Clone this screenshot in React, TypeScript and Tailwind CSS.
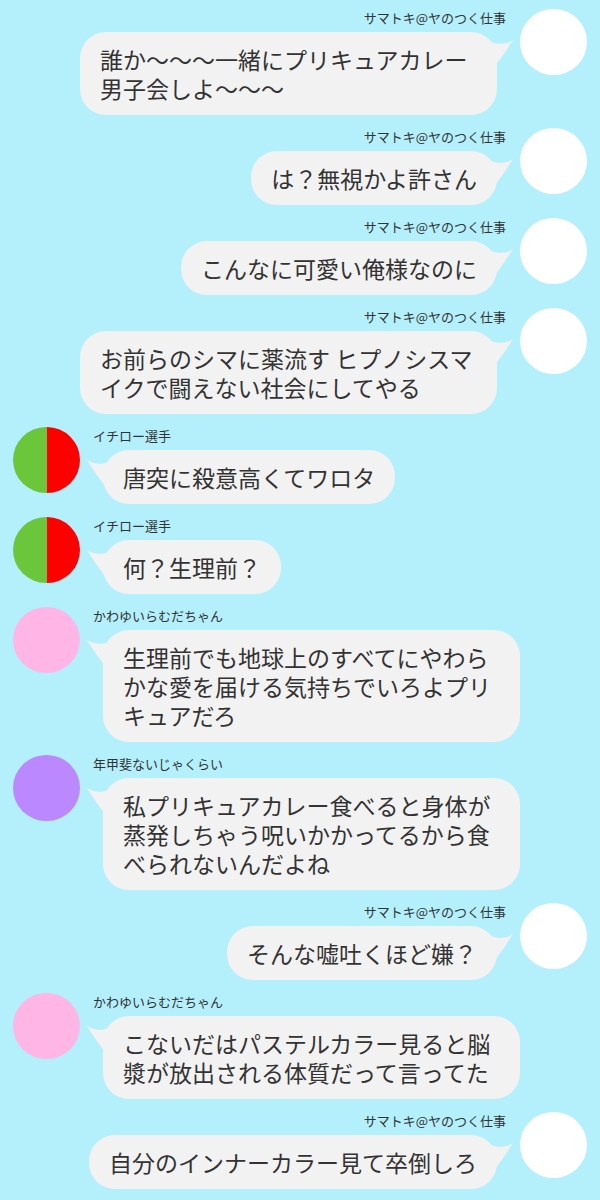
import React from "react";

type Side = "left" | "right";

type Msg = {
  side: Side;
  name: string;
  lines: string[];
  avatar: "white" | "ichiro" | "pink" | "purple";
};

const SAMATOKI = "サマトキ@ヤのつく仕事";

const messages: Msg[] = [
  { side: "right", name: SAMATOKI, avatar: "white", lines: ["誰か〜〜〜一緒にプリキュアカレー", "男子会しよ〜〜〜"] },
  { side: "right", name: SAMATOKI, avatar: "white", lines: ["は？無視かよ許さん"] },
  { side: "right", name: SAMATOKI, avatar: "white", lines: ["こんなに可愛い俺様なのに"] },
  { side: "right", name: SAMATOKI, avatar: "white", lines: ["お前らのシマに薬流す ヒプノシスマ", "イクで闘えない社会にしてやる"] },
  { side: "left", name: "イチロー選手", avatar: "ichiro", lines: ["唐突に殺意高くてワロタ"] },
  { side: "left", name: "イチロー選手", avatar: "ichiro", lines: ["何？生理前？"] },
  { side: "left", name: "かわゆいらむだちゃん", avatar: "pink", lines: ["生理前でも地球上のすべてにやわら", "かな愛を届ける気持ちでいろよプリ", "キュアだろ"] },
  { side: "left", name: "年甲斐ないじゃくらい", avatar: "purple", lines: ["私プリキュアカレー食べると身体が", "蒸発しちゃう呪いかかってるから食", "べられないんだよね"] },
  { side: "right", name: SAMATOKI, avatar: "white", lines: ["そんな嘘吐くほど嫌？"] },
  { side: "left", name: "かわゆいらむだちゃん", avatar: "pink", lines: ["こないだはパステルカラー見ると脳", "漿が放出される体質だって言ってた"] },
  { side: "right", name: SAMATOKI, avatar: "white", lines: ["自分のインナーカラー見て卒倒しろ"] },
];

function Avatar({ kind }: { kind: Msg["avatar"] }) {
  if (kind === "ichiro") {
    return (
      <div className="flex h-[66px] w-[67px] shrink-0 overflow-hidden rounded-full">
        <div className="h-full w-1/2 bg-[#6cc63c]" />
        <div className="h-full w-1/2 bg-[#ff0000]" />
      </div>
    );
  }
  const color =
    kind === "pink" ? "bg-[#ffb6e6]" : kind === "purple" ? "bg-[#bb88ff]" : "bg-white";
  return <div className={`h-[66px] w-[67px] shrink-0 rounded-full ${color}`} />;
}

function Tail({ side }: { side: Side }) {
  if (side === "right") {
    return (
      <svg
        className="absolute left-[calc(100%-6px)] top-[6px]"
        width="24"
        height="30"
        viewBox="0 0 24 30"
      >
        <path d="M0 4 C8 7 16 6 22 2 C17 10 11 19 4 28 L0 28 Z" fill="#f2f2f2" />
      </svg>
    );
  }
  return (
    <svg
      className="absolute right-[calc(100%-6px)] top-[8px]"
      width="24"
      height="30"
      viewBox="0 0 24 30"
    >
      <path d="M24 4 C16 7 8 6 2 2 C7 10 13 19 20 28 L24 28 Z" fill="#f2f2f2" />
    </svg>
  );
}

function Bubble({ msg }: { msg: Msg }) {
  const multi = msg.lines.length > 1;
  return (
    <div
      className={`relative rounded-[26px] bg-[#f2f2f2] pb-[12px] pl-[20px] pr-[20px] pt-[13px] text-[23px] leading-[29px] text-[#333] ${
        multi ? "w-[417px]" : "max-w-[417px]"
      }`}
    >
      <Tail side={msg.side} />
      <p className="whitespace-pre">{msg.lines.join("\n")}</p>
    </div>
  );
}

function Row({ msg }: { msg: Msg }) {
  if (msg.side === "right") {
    return (
      <div className="flex items-start justify-end gap-[14px] pr-[13px]">
        <div className="flex flex-col items-end">
          <div className="h-[18px] text-[13px] leading-[18px] text-[#333]">{msg.name}</div>
          <div className="mr-[9px] mt-[5px]">
            <Bubble msg={msg} />
          </div>
        </div>
        <Avatar kind={msg.avatar} />
      </div>
    );
  }
  return (
    <div className="flex items-start gap-[13px] pl-[13px]">
      <Avatar kind={msg.avatar} />
      <div className="flex flex-col items-start">
        <div className="h-[18px] text-[13px] leading-[18px] text-[#333]">{msg.name}</div>
        <div className="ml-[10px] mt-[5px]">
          <Bubble msg={msg} />
        </div>
      </div>
    </div>
  );
}

export default function App() {
  return (
    <div
      className="flex min-h-[1200px] w-[600px] flex-col gap-[13px] overflow-hidden bg-[#b4effc] pt-[9px]"
      style={{ fontFamily: '"Noto Sans CJK JP", "Noto Sans", sans-serif' }}
    >
      {messages.map((m, i) => (
        <Row key={i} msg={m} />
      ))}
    </div>
  );
}
